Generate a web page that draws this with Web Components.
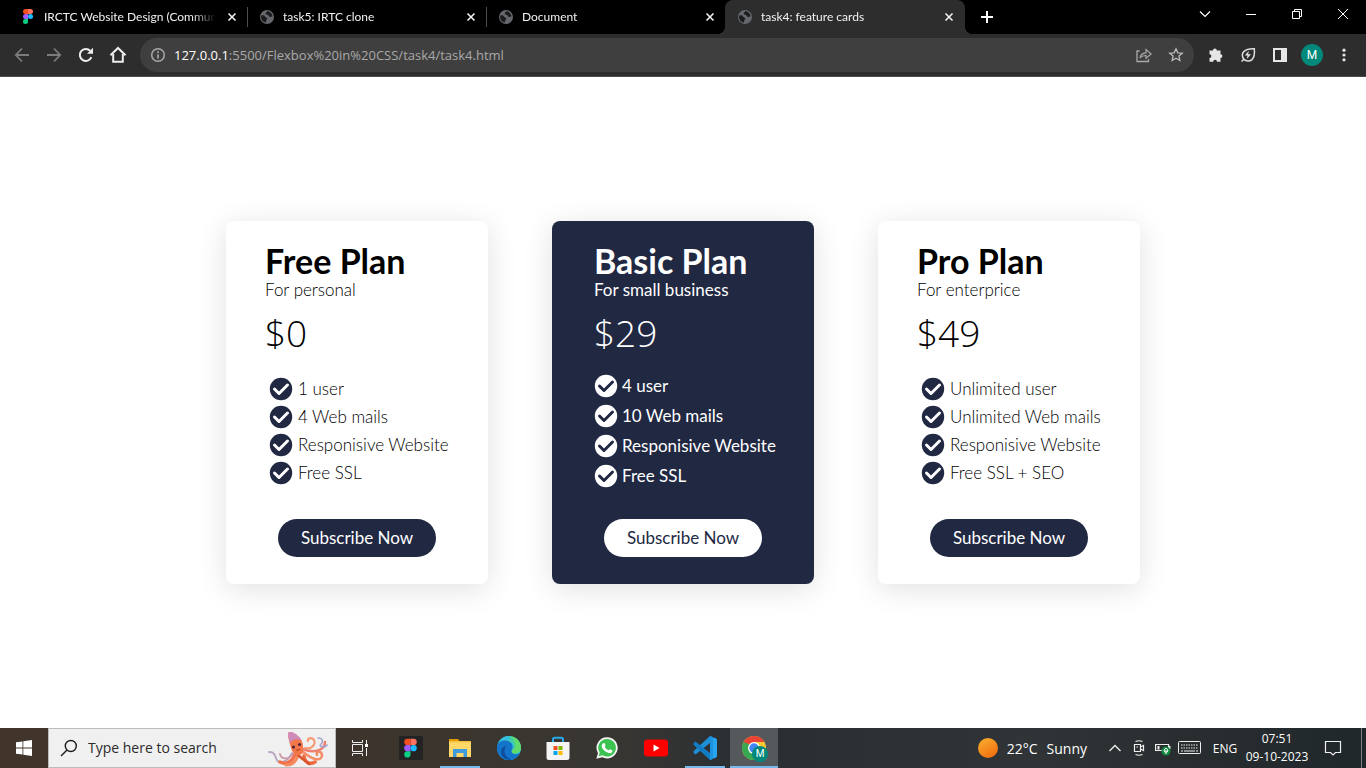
<!DOCTYPE html>
<html lang="en">
<head>
<meta charset="utf-8">
<title>task4: feature cards</title>
<style>
  body { margin: 0; font-family: "Open Sans", "Noto Sans", sans-serif; }
</style>
</head>
<body>
<desktop-screen>
  <browser-chrome slot="chrome">
    <browser-tab slot="tabs" icon="figma">IRCTC Website Design (Community)</browser-tab>
    <browser-tab slot="tabs" icon="globe" divided>task5: IRTC clone</browser-tab>
    <browser-tab slot="tabs" icon="globe" divided>Document</browser-tab>
    <browser-tab slot="tabs" icon="globe" active>task4: feature cards</browser-tab>
  </browser-chrome>

  <plan-card name="Free Plan" audience="For personal" price="$0">
    <plan-feature>1 user</plan-feature>
    <plan-feature>4 Web mails</plan-feature>
    <plan-feature>Responisive Website</plan-feature>
    <plan-feature>Free SSL</plan-feature>
  </plan-card>
  <plan-card featured name="Basic Plan" audience="For small business" price="$29">
    <plan-feature>4 user</plan-feature>
    <plan-feature>10 Web mails</plan-feature>
    <plan-feature>Responisive Website</plan-feature>
    <plan-feature>Free SSL</plan-feature>
  </plan-card>
  <plan-card name="Pro Plan" audience="For enterprice" price="$49">
    <plan-feature>Unlimited user</plan-feature>
    <plan-feature>Unlimited Web mails</plan-feature>
    <plan-feature>Responisive Website</plan-feature>
    <plan-feature>Free SSL + SEO</plan-feature>
  </plan-card>

  <task-bar slot="taskbar"></task-bar>
</desktop-screen>

<script>
const svg = (w, h, body, extra = '') =>
  `<svg width="${w}" height="${h}" viewBox="0 0 ${w} ${h}" fill="none" aria-hidden="true" ${extra}>${body}</svg>`;

const figmaBody = `
  <path d="M5.500 0H8v5H5.500a2.500 2.500 0 0 1 0-5z" fill="#f24e1e"/>
  <path d="M8 0h2.500a2.500 2.500 0 0 1 0 5H8z" fill="#ff7262"/>
  <path d="M5.500 5H8v5H5.500a2.500 2.500 0 0 1 0-5z" fill="#a259ff"/>
  <circle cx="10.500" cy="7.500" r="2.500" fill="#1abcfe"/>
  <path d="M5.500 10H8v2.500A2.500 2.500 0 1 1 5.500 10z" fill="#0acf83"/>`;

const ICONS = {
  figma: svg(16, 16, figmaBody),
  globe: svg(16, 16, `
    <circle cx="8" cy="8" r="7" fill="#64676b"/>
    <path d="M2.500 6.500c1.500-.5 3 0 3.500 1s1.800.8 2.200 1.700c.4 1-.9 1.300-1 2.500-.1.900-.2 1.500-.7 1.900C3.800 13 2 10.500 2 8z" fill="#1b1c1e"/>
    <path d="M8.200 2.300c-.2 1.200-1.700 1.200-1.500 2.500.2 1 1.600.7 2.400 1.300.9.600.6 1.700 1.700 1.900 1.200.2 1.500-.7 2.700-.5C13.300 4.700 11 2.300 8.200 2.300z" fill="#1b1c1e"/>`),
  close: svg(16, 16, `<path d="M4.500 4.500l7 7M11.500 4.500l-7 7" stroke="#f1f1f1" stroke-width="1.600"/>`),
  plus: svg(16, 16, `<path d="M8 2v12M2 8h12" stroke="#fff" stroke-width="2"/>`),
  chevdown: svg(14, 14, `<path d="M2 4.500l5 5 5-5" stroke="#fff" stroke-width="1.200"/>`),
  minimize: svg(12, 12, `<path d="M1 6.500h10" stroke="#fff"/>`),
  restore: svg(12, 12, `<path d="M1.500 3.500h7v7h-7zM3.500 3.500v-2h7v7h-2" stroke="#fff"/>`),
  winclose: svg(12, 12, `<path d="M1 1l10 10M11 1L1 11" stroke="#fff"/>`),
  back: svg(16, 16, `<path d="M15 8H2.500M8 1.500L1.800 8 8 14.500" stroke="#7c7c7c" stroke-width="1.800"/>`),
  forward: svg(16, 16, `<path d="M1 8h12.500M8 1.500L14.200 8 8 14.500" stroke="#7c7c7c" stroke-width="1.800"/>`),
  reload: svg(16, 16, `<path d="M13.400 10.200A6 6 0 1 1 12.200 3.800" stroke="#eee" stroke-width="2"/><path d="M15 .8v6H9z" fill="#eee"/>`),
  home: svg(18, 18, `<path d="M4.200 8v7.800h9.600V8" stroke="#eee" stroke-width="2"/><path d="M1.500 9.300L9 2l7.500 7.300" stroke="#eee" stroke-width="2"/>`),
  info: svg(16, 16, `<circle cx="8" cy="8" r="6.300" stroke="#a9a9a9" stroke-width="1.500"/><path d="M8 7.200v4.300M8 4.300v1.700" stroke="#a9a9a9" stroke-width="1.600"/>`),
  share: svg(16, 16, `<path d="M3.500 4H1v10.500h11.500V12" stroke="#a9a9a9" stroke-width="1.300"/><path d="M4 11c.6-3.500 2.500-5 6-5.200V2.500L15.200 7 10 11.300V8.500C7.500 8.400 5.600 9 4 11z" stroke="#a9a9a9" stroke-width="1.200"/>`),
  star: svg(16, 16, `<path d="M8 1.800l1.800 4 4.500.4-3.400 2.900 1 4.400L8 11.200l-3.900 2.300 1-4.400-3.400-2.900 4.500-.4z" stroke="#bdbdbd" stroke-width="1.300"/>`),
  puzzle: svg(16, 16, `<path d="M1.500 3.500H5A1.900 1.900 0 0 1 8.800 3.500h3.700v3.700a1.900 1.900 0 0 1 0 3.800v3.700H9A1.900 1.900 0 0 0 5.200 14.700H1.500V11A1.900 1.900 0 0 0 1.500 7.200z" fill="#e6e6e6"/>`),
  leaf: svg(16, 16, `<path d="M14.300 1.700c.5 4.800.1 8.700-2.300 10.900-2.300 2-6 1.800-8-.2s-2.400-5.700 0-8C6.200 2.100 10 1.600 14.300 1.700zM4 12.200l-2.500 2.300" stroke="#e0e0e0" stroke-width="1.500"/><path d="M8.800 3.800L4.900 8.500h2.600L6.800 12l4.200-4.700H8.200z" fill="#e0e0e0"/>`),
  panel: svg(16, 16, `<path d="M1 1h14v14H1zM3 3v10h6V3z" fill="#e6e6e6" fill-rule="evenodd"/>`),
  dots: svg(16, 16, `<g fill="#e6e6e6"><circle cx="8" cy="3.200" r="1.600"/><circle cx="8" cy="8" r="1.600"/><circle cx="8" cy="12.800" r="1.600"/></g>`),
  check: svg(24, 24, `<circle cx="12" cy="12" r="11.200" fill="currentColor"/><path d="M5.500 12l4.500 4.500L18.500 8" stroke="var(--tick, #fff)" stroke-width="3" stroke-linecap="round" stroke-linejoin="round"/>`),

  windows: svg(16, 16, `<path d="M0 2.300L6.500 1.400v6.100H0zM7.300 1.300L16 0v7.500H7.300zM0 8.400h6.500v6.200L0 13.700zM7.300 8.400H16V16l-8.700-1.200z" fill="#fff"/>`),
  search: svg(18, 18, `<circle cx="10.800" cy="7" r="5.500" stroke="#1c1c1c" stroke-width="1.400"/><path d="M7 11L1 17" stroke="#1c1c1c" stroke-width="1.400"/>`),
  octopus: svg(60, 38, `
    <g stroke-linecap="round" fill="none">
      <path d="M24 24C19 34 10 36 8 29 6 23 4 23 1 23" stroke="#b9a3c0" stroke-width="1.800"/>
      <path d="M26 24C20 32 13 30 12 25" stroke="#cf9aa6" stroke-width="1.800"/>
      <path d="M27 26C24 33 18 36 12 33" stroke="#f0714a" stroke-width="3.500"/>
      <path d="M30 26C28 34 23 36 18 36" stroke="#f58a5e" stroke-width="3"/>
      <path d="M36 27C37 34 42 36 47 33" stroke="#ee6a41" stroke-width="3.500"/>
      <path d="M34 22C42 29 52 34 54 27 54 21 47 22 49 26" stroke="#f58e66" stroke-width="2.500"/>
      <path d="M35 20C46 25 57 21 57 13" stroke="#ec8170" stroke-width="2.500"/>
      <path d="M37 19C45 21 49 13 45 10 42 8 39 10 40 12" stroke="#f79a74" stroke-width="2.200"/>
      <path d="M50 9c4 0 6 3 3 6s4 4 6 1" stroke="#a7a3cb" stroke-width="1.600"/>
      <path d="M30 26c4 4 8 6 11 9" stroke="#d9542f" stroke-width="2.500"/>
    </g>
    <path d="M20 4c2-2 6-.5 10 3 3 3 5 6 5 10-.2 6 1 7-3 9-5 1-8-3-9-7-1-4-3-9-3-15z" fill="#f27749"/>
    <path d="M20 4c2-2 6-.5 10 3 2 1.500 3 3 4 5-4-3-9-2-12 2-1-3-2-7-2-10z" fill="#d08bbd"/>
    <circle cx="25.500" cy="18" r="1.600" fill="#53233a"/><circle cx="31.500" cy="15.500" r="1.600" fill="#53233a"/>
    <path d="M28 21q2 1 4-1" stroke="#a33a26"/>`),
  taskview: svg(16, 16, `<path d="M.5 0v2.500h10V0M.5 16v-2.500h10V16M.5 4.500h10v7H.5zM14.500 0v4M14.500 8v8" stroke="#eee"/><path d="M13 4h3v3h-3z" fill="#fff"/>`),
  figmaapp: svg(24, 24, `<rect width="24" height="24" rx="1" fill="#232323"/><g transform="translate(1.500 2.800) scale(1.250)">${figmaBody}</g>`),
  explorer: svg(24, 24, `<path d="M1 3h9l1.500 2H1z" fill="#e19d00"/><path d="M1 5h22v16H1z" fill="#ffd869"/><path d="M1 5h22v1.500H1z" fill="#f5c242"/><path d="M5 13h14v8h-3.500v-4h-7v4H5z" fill="#3f9bdc"/>`),
  edge: svg(24, 24, `
    <circle cx="12" cy="12" r="12" fill="#2ba9e0"/>
    <path d="M8 .8A12 12 0 0 1 24 12c0 4-3 5.500-6 5.500-3.500 0-4.500-1.500-3-3.500 1.500-5-4-8-13.500-5A12 12 0 0 1 8 .8z" fill="#42cfa3"/>
    <path d="M12 0a12 12 0 0 0-11 8c3-4 10-5.500 14-1.500 1.500 1.500 2 4 1 7z" fill="#35bede"/>
    <path d="M24 12c0 4-3 5.500-6 5.500-3 0-4.500-1.300-3.200-3.200C20 13 20 6 14 .2 20 1.200 24 6 24 12z" fill="#5fdc6b"/>
    <path d="M0 11c0-4 4-6.500 8-6.500 5 0 8.500 3.500 7.500 8-.5 2-2 2.500-.5 4.200 2 2 5 1.800 7.500.8C20.500 21.500 16.500 24 12 24A12 12 0 0 1 0 11z" fill="#1474c9"/>
    <path d="M9.500 10c-4 4-2 11 5 13.700C7 24.500 3 19 4.500 14c1-3 3-4 5-4z" fill="#0c4c9c"/>`),
  store: svg(24, 24, `<path d="M7 6V3.500Q7 1.800 8.700 1.800h6.600Q17 1.800 17 3.500V6" stroke="#29a9ea" stroke-width="2"/><path d="M.5 6h23v15.500a2.500 2.500 0 0 1-2.500 2.500H3A2.500 2.500 0 0 1 .5 21.500z" fill="#f4f4f4"/><path d="M7.500 10h4v4h-4z" fill="#f25022"/><path d="M12.500 10h4v4h-4z" fill="#7fba00"/><path d="M7.500 15h4v4h-4z" fill="#00a4ef"/><path d="M12.500 15h4v4h-4z" fill="#ffb900"/>`),
  whatsapp: svg(24, 24, `<path d="M12.200 1.200A10.600 10.600 0 0 0 3 17.200L1.300 22.800 7.200 21.200A10.600 10.600 0 1 0 12.200 1.200z" fill="#f5f5f5"/><path d="M12.200 3a8.800 8.800 0 0 0-7.500 13.600L3.700 20.300l3.800-1A8.800 8.800 0 1 0 12.200 3z" fill="#3cc251"/><path d="M8.300 7.200c.6-.5 1.200-.3 1.500.4l.7 1.600c.2.600-.8 1.400-.6 1.800.8 1.500 2 2.500 3.500 3.200.5.200 1.100-1.200 1.700-1l2 1c.6.300.3 1.500-.1 2-1 1.200-2.500 1.200-4 .6-3-1-5.200-3.200-6.100-5.500-.5-1.500 0-3.200 1.400-4.100z" fill="#fff"/>`),
  youtube: svg(24, 24, `<rect y="3.500" width="24" height="17" rx="3.500" fill="#f00"/><path d="M9.500 8.500v7l6-3.500z" fill="#fff"/>`),
  vscode: svg(24, 24, `<path d="M17 0l7 3v18l-7 3z" fill="#27a5ee"/><path d="M17 0v7L2.500 18.500.5 16.800v-1.500z" fill="#1d8fd8"/><path d="M17 24v-7L2.500 5.500.5 7.200v1.500z" fill="#117cc4"/><path d="M17 0l3 1.300V22.700L17 24z" fill="#1b93df"/>`),
  chromeapp: svg(24, 24, `<circle cx="12" cy="12" r="12" fill="#fcc934"/><path d="M1.600 6A12 12 0 0 1 22.400 6H12L6.800 15z" fill="#ea4335"/><path d="M1.600 6A12 12 0 0 0 12 24l5.200-9H6.800z" fill="#34a853"/><path d="M1.600 6L6.800 15 9 9z" fill="#34a853"/><circle cx="12" cy="12" r="6" fill="#fff"/><circle cx="12" cy="12" r="4.700" fill="#4285f4"/>`),
  sun: svg(20, 20, `<defs><linearGradient id="sunlight" x1="0" y1="0" x2=".6" y2="1"><stop stop-color="#f9b233"/><stop offset="1" stop-color="#f2710f"/></linearGradient></defs><circle cx="10" cy="10" r="10" fill="url(#sunlight)"/>`),
  chevup: svg(14, 14, `<path d="M1.500 10L7 4.500l5.500 5.500" stroke="#eee" stroke-width="1.300"/>`),
  camera: svg(16, 16, `<path d="M3.500 4.500h6v7h-6zM9.500 7l3-1.500v5l-3-1.500M4.500 1.500Q8 0 11.500 1.500M4.500 14.500Q8 16 11.500 14.500" stroke="#eee" stroke-width="1.200"/><path d="M5.500 7h1.500" stroke="#eee"/>`),
  battery: svg(16, 16, `<path d="M.6 4.500h13v6h-13z" stroke="#eee" stroke-width="1.200"/><path d="M2.500 6h2v3.500h-2zM14 6h1.500v3H14z" fill="#eee"/><circle cx="11" cy="11" r="4.500" fill="#10893e"/><path d="M11 8.500a2 2 0 0 1 1.200 3.500H9.800A2 2 0 0 1 11 8.500zM11 10v4" stroke="#fff"/>`),
  keyboard: svg(24, 14, `<rect x=".500" y=".500" width="22" height="12" rx="1" stroke="#eee"/><path d="M3 4h17M3 7h17" stroke="#eee" stroke-width="1.200" stroke-dasharray="1.500 1"/><path d="M3 10h2M6 10h11M18 10h2" stroke="#eee" stroke-width="1.200"/>`),
  notice: svg(18, 18, `<path d="M1.500 2.500h15v11h-5L9 16l-2.500-2.500h-5z" stroke="#eee" stroke-width="1.200"/>`),
};

class UiIcon extends HTMLElement {
  connectedCallback() {
    if (this.shadowRoot) return;
    this.attachShadow({ mode: 'open' }).innerHTML =
      `<style>:host{display:inline-flex;flex:none}svg{display:block}</style>${ICONS[this.getAttribute('name')]}`;
  }
}

const resetButton = `button{border:0;margin:0;padding:0;background:none;color:inherit;font:inherit;display:flex;align-items:center;justify-content:center}`;

class DesktopScreen extends HTMLElement {
  constructor() {
    super();
    this.attachShadow({ mode: 'open' }).innerHTML = `
      <style>
        :host { display: grid; grid-template-rows: auto 1fr auto; grid-template-columns: minmax(0, 1fr); min-height: 100vh; background: #fff; }
        main { display: flex; flex-wrap: wrap; justify-content: center; align-content: center; gap: 64px; padding: 32px; }
      </style>
      <slot name="chrome"></slot>
      <main><slot></slot></main>
      <slot name="taskbar"></slot>`;
  }
}

class BrowserTab extends HTMLElement {
  connectedCallback() {
    if (this.shadowRoot) return;
    this.attachShadow({ mode: 'open' }).innerHTML = `
      <style>
        ${resetButton}
        :host { position: relative; box-sizing: border-box; display: flex; align-items: center; flex: 0 1 239px; min-width: 0; height: 34px; padding: 0 7px 0 12px; color: #f1f1f1; font: 12px/20px Lato, "Open Sans", sans-serif; }
        .title { flex: 1; min-width: 0; margin: 0 8px; overflow: hidden; white-space: nowrap; mask-image: linear-gradient(90deg, #000 calc(100% - 24px), transparent); }
        button { width: 16px; height: 16px; }
        :host([divided])::before { content: ""; position: absolute; left: 0; top: 7px; width: 1px; height: 20px; background: #4c4c4c; }
        :host([active]) { flex-basis: 240px; padding-right: 8px; background: #2d2d2d; border-radius: 8px 8px 0 0; }
        :host([active])::before, :host([active])::after { content: ""; position: absolute; bottom: 0; width: 8px; height: 8px; }
        :host([active])::before { left: -8px; background: radial-gradient(circle at 0 0, transparent 8px, #2d2d2d 8px); }
        :host([active])::after { right: -8px; background: radial-gradient(circle at 100% 0, transparent 8px, #2d2d2d 8px); }
      </style>
      <ui-icon name="${this.getAttribute('icon')}"></ui-icon>
      <span class="title"><slot></slot></span>
      <button aria-label="Close tab"><ui-icon name="close"></ui-icon></button>`;
  }
}

class BrowserChrome extends HTMLElement {
  constructor() {
    super();
    const b = (icon, label) => `<button aria-label="${label}"><ui-icon name="${icon}"></ui-icon></button>`;
    this.attachShadow({ mode: 'open' }).innerHTML = `
      <style>
        ${resetButton}
        :host { display: block; background: #2d2d2d; border-bottom: 1px solid #4b4b4b; }
        .strip { display: flex; height: 34px; background: #000; padding-left: 8px; }
        .strip > .add { width: 44px; height: 34px; }
        .window { display: flex; margin-left: auto; }
        .window button { width: 46px; height: 28px; }
        .bar { display: flex; align-items: center; height: 42px; padding: 0 6px; }
        .bar button { flex: none; width: 32px; height: 32px; }
        .address { flex: 1; min-width: 0; display: flex; align-items: center; height: 34px; margin: 0 6px; padding: 0 2px 0 10px; border-radius: 17px; background: #3f3f3f; font-size: 13px; box-sizing: border-box; }
        label { padding-left: 8px; color: #fff; }
        input { flex: 1; min-width: 0; border: 0; padding: 0; outline: 0; background: none; font: inherit; color: #a9a9a9; }
        .avatar { display: grid; place-items: center; width: 22px; height: 22px; border-radius: 50%; background: #00897b; color: #fff; font: 12px/22px Roboto, sans-serif; }
      </style>
      <div class="strip">
        <slot name="tabs"></slot>
        <button class="add" aria-label="New tab"><ui-icon name="plus"></ui-icon></button>
        <div class="window">${b('chevdown', 'Search tabs')}${b('minimize', 'Minimise')}${b('restore', 'Restore')}${b('winclose', 'Close')}</div>
      </div>
      <div class="bar">
        ${b('back', 'Back')}${b('forward', 'Forward')}${b('reload', 'Reload')}${b('home', 'Home')}
        <div class="address">
          <ui-icon name="info"></ui-icon>
          <label for="url">127.0.0.1</label>
          <input id="url" type="text" value=":5500/Flexbox%20in%20CSS/task4/task4.html">
          ${b('share', 'Share')}${b('star', 'Bookmark')}
        </div>
        ${b('puzzle', 'Extensions')}${b('leaf', 'Energy saver')}${b('panel', 'Side panel')}
        <button aria-label="Profile M"><span class="avatar">M</span></button>
        ${b('dots', 'Menu')}
      </div>`;
  }
}

class PlanFeature extends HTMLElement {
  constructor() {
    super();
    this.attachShadow({ mode: 'open' }).innerHTML = `
      <style>
        :host { display: flex; align-items: center; gap: var(--icon-gap); height: 24px; white-space: nowrap; }
        ui-icon { color: var(--badge); }
      </style>
      <ui-icon name="check"></ui-icon><slot></slot>`;
  }
  connectedCallback() { this.setAttribute('role', 'listitem'); }
}

class PlanCard extends HTMLElement {
  connectedCallback() {
    if (this.shadowRoot) return;
    const get = (name) => this.getAttribute(name);
    this.attachShadow({ mode: 'open' }).innerHTML = `
      <style>
        :host {
          --navy: #212842; --badge: #212842; --tick: #fff; --icon-gap: 5px;
          box-sizing: border-box; display: flex; flex-direction: column; align-items: center;
          width: 262px; padding: 22px 0 27px; border-radius: 8px;
          background: #fff; color: #000; box-shadow: 0 5px 30px rgba(0, 0, 0, .12);
          font: 300 17px/20px Lato, "Open Sans", sans-serif;
        }
        .body { width: 184px; }
        h2 { margin: 0; font-size: 34px; line-height: 35px; font-weight: 700; white-space: nowrap; }
        p { margin: 0; }
        .audience { margin-top: 2px; }
        .price { margin-top: 9px; font: 300 37px/48px "Open Sans", sans-serif; }
        .list { display: flex; flex-direction: column; gap: 4px; margin: 20px 0 34px; padding-left: 4px; }
        button { width: 158px; height: 38px; border: 0; border-radius: 19px; padding: 0; background: var(--navy); color: #fff; font: inherit; font-weight: 400; }
        :host([featured]) { --badge: #fff; --tick: #212842; --icon-gap: 4px; background: var(--navy); color: #fff; font-weight: 400; }
        :host([featured]) .body { width: 178px; }
        :host([featured]) .list { gap: 6px; margin: 17px 0 31px; padding-left: 0; }
        :host([featured]) button { background: #fff; color: var(--navy); }
      </style>
      <div class="body">
        <h2>${get('name')}</h2>
        <p class="audience">${get('audience')}</p>
        <p class="price">${get('price')}</p>
        <div class="list" role="list"><slot></slot></div>
      </div>
      <button>Subscribe Now</button>`;
  }
}

class TaskBar extends HTMLElement {
  constructor() {
    super();
    const app = (icon, label, cls = '') => `<button class="app ${cls}" aria-label="${label}"><ui-icon name="${icon}"></ui-icon></button>`;
    this.attachShadow({ mode: 'open' }).innerHTML = `
      <style>
        ${resetButton}
        :host { display: flex; height: 40px; color: #fff; background: linear-gradient(90deg, #41342b, #3c352d 30%, #383632 45%, #292e33 55%, #303436 75%, #20272a); }
        button { flex: none; height: 40px; }
        .wide { width: 48px; }
        .search { box-sizing: border-box; display: flex; align-items: center; flex: 0 1 288px; min-width: 0; padding: 0 7px 0 11px; background: #f0f0f0; border: 1px solid #bcbcbc; }
        input { flex: 1; min-width: 0; margin-left: 10px; padding: 0; border: 0; outline: 0; background: none; font: 14px/20px "Open Sans", "Noto Sans", sans-serif; color: #222; }
        input::placeholder { color: #2b2b2b; opacity: 1; }
        .apps { display: flex; gap: 1px; margin-left: 3px; }
        .app { position: relative; width: 48px; }
        .running::after { content: ""; position: absolute; left: 4px; right: 4px; bottom: 0; height: 2px; background: #76b9ed; }
        .current { background: #56595c; }
        .current::after { left: 0; right: 0; }
        .badge { position: absolute; left: 22px; top: 18px; width: 16px; height: 16px; border-radius: 50%; background: #00897b; font: 10px/16px Roboto, sans-serif; text-align: center; }
        .tray { display: flex; align-items: center; margin-left: auto; font-size: 12px; }
        .weather { gap: 9px; margin-right: 16px; font-size: 14px; }
        .small { width: 24px; }
        .keys { width: 30px; }
        .lang { width: 40px; }
        .clock { width: 64px; flex-direction: column; line-height: 18px; }
        .peek { width: 5px; margin-left: 4px; border-left: 1px solid #7b7f82; }
      </style>
      <button class="wide" aria-label="Start"><ui-icon name="windows"></ui-icon></button>
      <div class="search">
        <ui-icon name="search"></ui-icon>
        <input type="text" placeholder="Type here to search" aria-label="Type here to search">
        <ui-icon name="octopus"></ui-icon>
      </div>
      <button class="wide" aria-label="Task view"><ui-icon name="taskview"></ui-icon></button>
      <div class="apps">
        ${app('figmaapp', 'Figma')}${app('explorer', 'File Explorer', 'running')}${app('edge', 'Edge')}${app('store', 'Store')}
        ${app('whatsapp', 'WhatsApp')}${app('youtube', 'YouTube')}${app('vscode', 'VS Code', 'running')}
        <button class="app running current" aria-label="Chrome M"><ui-icon name="chromeapp"></ui-icon><span class="badge">M</span></button>
      </div>
      <div class="tray">
        <button class="weather"><ui-icon name="sun"></ui-icon><span>22°C</span><span>Sunny</span></button>
        <button class="small" aria-label="Hidden icons"><ui-icon name="chevup"></ui-icon></button>
        <button class="small" aria-label="Meet now"><ui-icon name="camera"></ui-icon></button>
        <button class="small" aria-label="Battery"><ui-icon name="battery"></ui-icon></button>
        <button class="keys" aria-label="Touch keyboard"><ui-icon name="keyboard"></ui-icon></button>
        <button class="lang">ENG</button>
        <button class="clock"><span>07:51</span><span>09-10-2023</span></button>
        <button class="wide" aria-label="Notifications"><ui-icon name="notice"></ui-icon></button>
        <button class="peek" aria-label="Show desktop"></button>
      </div>`;
  }
}

customElements.define('ui-icon', UiIcon);
customElements.define('desktop-screen', DesktopScreen);
customElements.define('browser-tab', BrowserTab);
customElements.define('browser-chrome', BrowserChrome);
customElements.define('plan-feature', PlanFeature);
customElements.define('plan-card', PlanCard);
customElements.define('task-bar', TaskBar);
</script>
</body>
</html>
